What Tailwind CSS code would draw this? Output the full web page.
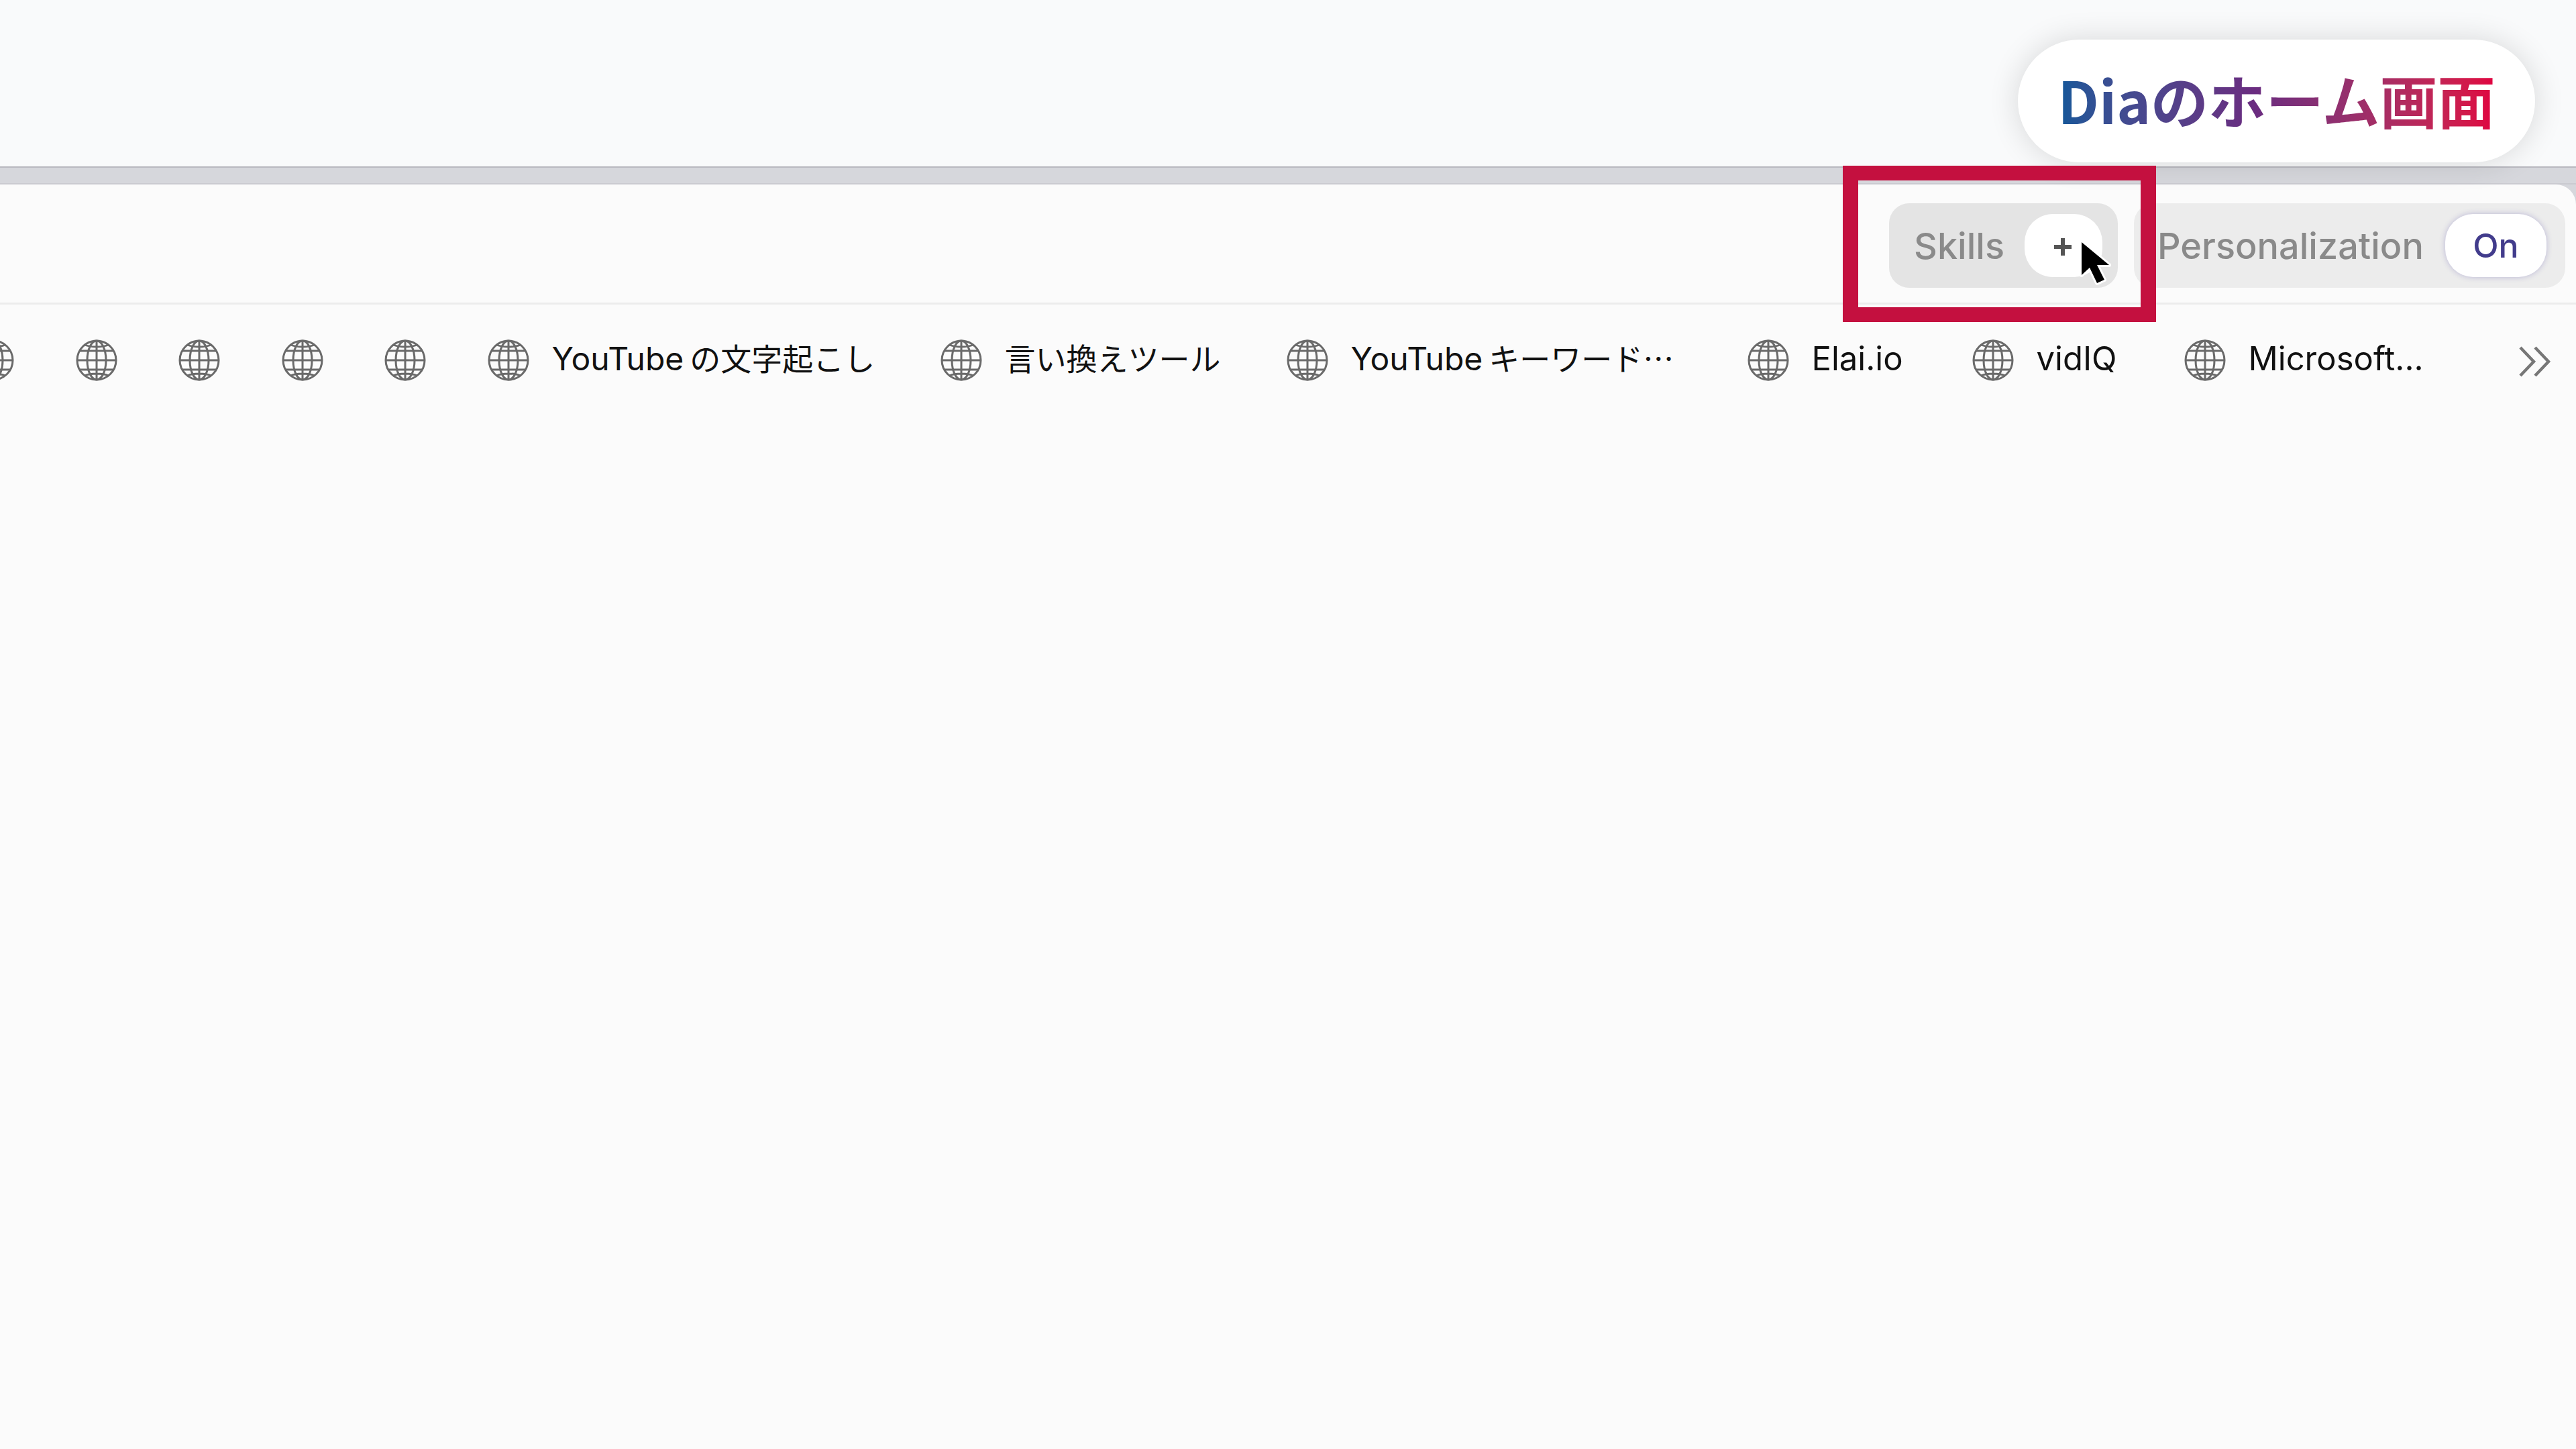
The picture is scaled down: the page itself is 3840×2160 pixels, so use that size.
<!DOCTYPE html>
<html lang="ja">

<head>
  <meta charset="UTF-8" />
  <title>Diaのホーム画面</title>
  <script src="https://cdn.jsdelivr.net/npm/@tailwindcss/browser@4"></script>
</head>

<body class="relative w-[3840px] h-[2160px] overflow-hidden flex flex-col bg-[#f9fafb] font-['Inter','Noto_Sans_CJK_JP',sans-serif]">
  <svg class="hidden">
    <symbol id="globe" viewBox="0 0 62 62">
      <g fill="none" stroke="#6a6a6a" stroke-width="3">
        <circle cx="31" cy="31" r="29" />
        <ellipse cx="31" cy="31" rx="14" ry="29" />
        <path d="M31 2V60M2 31H60M5.6 17H56.4M5.6 45H56.4M13.3 8C22 12 40 12 48.7 8M13.3 54C22 50 40 50 48.7 54" />
      </g>
    </symbol>
  </svg>

  <!-- top space -->
  <div class="h-[248px] shrink-0"></div>

  <!-- window -->
  <div class="flex-1 flex flex-col bg-[#d6d7dc] border-t-2 border-[#b9b9c0]">
    <div class="h-[25px] shrink-0 border-b-2 border-[#cacad0]"></div>
    <div class="flex-1 flex flex-col bg-[#fbfbfb] rounded-tr-[30px]">
      <!-- toolbar -->
      <div class="h-[179px] shrink-0 flex justify-end items-start gap-[24px] pt-[28px] pr-[16px] border-b-[3px] border-[#ececec]">
        <div class="w-[341px] h-[126px] flex items-center justify-between pl-[37px] pr-[23px] rounded-[30px] bg-[#e4e4e4]">
          <span class="text-[54px] font-medium text-[#8a8a8a]">Skills</span>
          <span class="w-[116px] h-[94px] flex items-center justify-center rounded-[42px] bg-white">
            <svg class="w-[28px] h-[28px] mt-[3px] -ml-[2px]" viewBox="0 0 28 28">
              <path d="M14 1V27M1 14H27" stroke="#555" stroke-width="6" fill="none" />
            </svg>
          </span>
        </div>
        <div class="w-[643px] h-[126px] flex items-center justify-between pl-[35px] pr-[28px] rounded-[30px] bg-[#ececec]">
          <span class="text-[54px] font-medium text-[#8a8a8a]">Personalization</span>
          <span class="w-[151px] h-[94px] flex items-center justify-center rounded-[42px] bg-white shadow-[0_0_8px_rgba(70,60,160,0.3)] text-[50px] font-medium text-[#423c8c]">On</span>
        </div>
      </div>

      <!-- bookmarks -->
      <div class="flex items-start -ml-[41px] pt-[52px] text-[49px] text-[#111] whitespace-nowrap">
        <div class="w-[153.5px] h-[62px]"><svg class="w-[62px] h-[62px]"><use href="#globe" /></svg></div>
        <div class="w-[153.5px] h-[62px]"><svg class="w-[62px] h-[62px]"><use href="#globe" /></svg></div>
        <div class="w-[153.5px] h-[62px]"><svg class="w-[62px] h-[62px]"><use href="#globe" /></svg></div>
        <div class="w-[153.5px] h-[62px]"><svg class="w-[62px] h-[62px]"><use href="#globe" /></svg></div>
        <div class="w-[153.5px] h-[62px]"><svg class="w-[62px] h-[62px]"><use href="#globe" /></svg></div>
        <div class="w-[675px] h-[62px] flex items-center gap-[34px]"><svg class="w-[62px] h-[62px]"><use href="#globe" /></svg><span class="pb-[4px]"><span class="text-[48px]">YouTube</span><span class="text-[46px] ml-[9px]">の文字起こし</span></span></div>
        <div class="w-[516px] h-[62px] flex items-center gap-[34px]"><svg class="w-[62px] h-[62px]"><use href="#globe" /></svg><span class="pb-[4px] text-[46px]">言い換えツール</span></div>
        <div class="w-[687px] h-[62px] flex items-center gap-[34px]"><svg class="w-[62px] h-[62px]"><use href="#globe" /></svg><span class="pb-[4px]"><span class="text-[48px]">YouTube</span><span class="text-[46px] ml-[9px] font-['Noto_Sans_CJK_JP',sans-serif]">キーワード…</span></span></div>
        <div class="w-[335px] h-[62px] flex items-center gap-[34px]"><svg class="w-[62px] h-[62px]"><use href="#globe" /></svg><span class="pb-[4px]">Elai.io</span></div>
        <div class="w-[316px] h-[62px] flex items-center gap-[34px]"><svg class="w-[62px] h-[62px]"><use href="#globe" /></svg><span class="pb-[4px]">vidIQ</span></div>
        <div class="w-[498px] h-[62px] flex items-center gap-[34px]"><svg class="w-[62px] h-[62px]"><use href="#globe" /></svg><span class="pb-[4px]">Microsoft...</span></div>
        <svg class="w-[50px] h-[46px] mt-[10px]" viewBox="0 0 50 46">
          <path d="M3 2L23 23L3 44M25 2L45 23L25 44" fill="none" stroke="#777" stroke-width="4.5" />
        </svg>
      </div>
    </div>
  </div>

  <!-- callout label -->
  <div class="absolute left-[3008px] top-[59px] w-[771px] h-[183px] flex items-center justify-center rounded-full bg-white shadow-[0_0_45px_rgba(0,0,0,0.14)]">
    <span class="pb-[5px] text-[86px] leading-none font-bold font-['Noto_Sans_CJK_JP',sans-serif] bg-clip-text text-transparent bg-linear-to-r from-[#0f5799] via-[#6a2c80] via-45% to-[#e0003f]">Diaのホーム画面</span>
  </div>

  <!-- highlight box -->
  <div class="absolute left-[2747px] top-[247px] w-[467px] h-[233px] border-x-[23px] border-y-[22px] border-[#c4103f]"></div>

  <!-- cursor -->
  <svg class="absolute left-[3090px] top-[348px] w-[70px] h-[90px]" viewBox="0 0 70 90">
    <path d="M13 13L13 62L25 51L36 74L47 69L36 47L54 47Z" fill="#000" stroke="#fff" stroke-width="6" paint-order="stroke" stroke-linejoin="round" />
  </svg>
</body>

</html>
